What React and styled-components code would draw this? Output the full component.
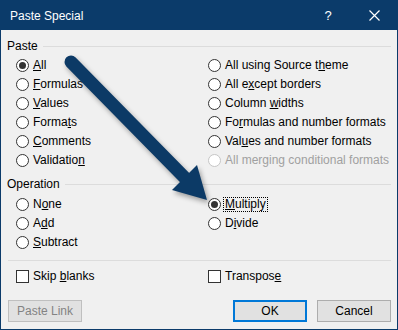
import React from 'react';
import styled, {createGlobalStyle, css} from 'styled-components';

const Global = createGlobalStyle`
  html, body {
    margin: 0;
    padding: 0;
    background: #ffffff;
  }
  body {
    font-family: "Liberation Sans", Arial, sans-serif;
    font-size: 12px;
    color: #000;
  }
`;

const BLUE = '#0b3b6a';

const Dialog = styled.div`
  position: relative;
  width: 398px;
  height: 330px;
  box-sizing: border-box;
  border: 1px solid ${BLUE};
  background: #f0f0f0;
  display: flex;
  flex-direction: column;
`;

const TitleBar = styled.div`
  height: 29px;
  background: ${BLUE};
  color: #fff;
  display: flex;
  align-items: center;
  padding-left: 9px;
`;

const Title = styled.div`
  flex: 1;
`;

const TitleButton = styled.div`
  width: 46px;
  height: 29px;
  display: flex;
  align-items: center;
  justify-content: center;
  font-size: 13px;
`;

const Body = styled.div`
  flex: 1;
  display: flex;
  flex-direction: column;
  padding: 8px 6px 7px 6px;
`;

const Legend = styled.div`
  display: flex;
  align-items: center;
  height: 16px;
  margin-top: ${p => p.$top || 0}px;

  &::after {
    content: '';
    flex: 1;
    height: 1px;
    background: #dcdcdc;
    margin-left: 5px;
  }
`;

const OptionGrid = styled.div`
  display: grid;
  grid-template-columns: 192px 1fr;
  grid-auto-flow: column;
  grid-template-rows: repeat(${p => p.$rows}, 19px);
  padding-left: 9px;
  margin-top: ${p => p.$top || 0}px;
`;

const Option = styled.label`
  display: flex;
  align-items: center;
  gap: 4px;
  color: ${p => (p.$disabled ? '#a0a0a0' : '#000')};
  white-space: nowrap;
`;

const Radio = styled.span`
  box-sizing: border-box;
  width: 13px;
  height: 13px;
  border-radius: 50%;
  border: 1px solid ${p => (p.$disabled ? '#c6c6c6' : '#333')};
  background: #fff;
  display: flex;
  align-items: center;
  justify-content: center;

  ${p => p.$checked && css`
    &::after {
      content: '';
      width: 7px;
      height: 7px;
      border-radius: 50%;
      background: #333;
    }
  `}
`;

const Check = styled.span`
  box-sizing: border-box;
  width: 13px;
  height: 13px;
  border: 1px solid #333;
  background: #fff;
`;

const Text = styled.span`
  line-height: 13px;
  padding: 0 1px;
  margin-left: -1px;
  outline: ${p => (p.$focus ? '1px dotted #000' : 'none')};
  outline-offset: 0;
`;

const Separator = styled.div`
  height: 1px;
  background: #dcdcdc;
  margin: 8px 0 6px 1px;
`;

const Footer = styled.div`
  display: flex;
  align-items: center;
  margin-top: auto;
  padding-left: 1px;
  gap: 10px;
`;

const Spacer = styled.div`
  flex: 1;
`;

const Button = styled.div`
  box-sizing: border-box;
  width: 74px;
  height: 22px;
  display: flex;
  align-items: center;
  justify-content: center;
  background: #e1e1e1;
  border: ${p => (p.$default ? '2px solid #0078d7' : p.$disabled ? '1px solid #bfbfbf' : '1px solid #adadad')};
  color: ${p => (p.$disabled ? '#838383' : '#000')};
`;

const ArrowLayer = styled.svg`
  position: absolute;
  left: 0;
  top: 0;
  pointer-events: none;
  filter: drop-shadow(2px 3px 2.5px rgba(0, 0, 0, 0.35));
`;

function Label({text, u, focus}) {
  if (u == null) return <Text $focus={focus}>{text}</Text>;
  return (
    <Text $focus={focus}>
      {text.slice(0, u)}<u>{text[u]}</u>{text.slice(u + 1)}
    </Text>
  );
}

const pasteOptions = [
  {text: 'All', u: 0, checked: true},
  {text: 'Formulas', u: 0},
  {text: 'Values', u: 0},
  {text: 'Formats', u: 5},
  {text: 'Comments', u: 0},
  {text: 'Validation', u: 9},
  {text: 'All using Source theme', u: 18},
  {text: 'All except borders', u: 5},
  {text: 'Column widths', u: 7},
  {text: 'Formulas and number formats', u: 2},
  {text: 'Values and number formats', u: 3},
  {text: 'All merging conditional formats', disabled: true},
];

const operationOptions = [
  {text: 'None', u: 1},
  {text: 'Add', u: 1},
  {text: 'Subtract', u: 0},
  {text: 'Multiply', u: 0, checked: true, focus: true},
  {text: 'Divide', u: 1},
  null,
];

export default function App() {
  return (
    <>
      <Global />
      <Dialog>
        <TitleBar>
          <Title>Paste Special</Title>
          <TitleButton>?</TitleButton>
          <TitleButton>
            <svg width="11" height="11" viewBox="0 0 11 11">
              <path d="M0.5 0.5 L10.5 10.5 M10.5 0.5 L0.5 10.5" stroke="#fff" strokeWidth="1.2" />
            </svg>
          </TitleButton>
        </TitleBar>
        <Body>
          <Legend>Paste</Legend>
          <OptionGrid $rows={6} $top={2}>
            {pasteOptions.map(o => (
              <Option key={o.text} $disabled={o.disabled}>
                <Radio $checked={o.checked} $disabled={o.disabled} />
                <Label text={o.text} u={o.u} />
              </Option>
            ))}
          </OptionGrid>
          <Legend $top={6}>Operation</Legend>
          <OptionGrid $rows={3} $top={3}>
            {operationOptions.map((o, i) => (
              o ? (
                <Option key={o.text}>
                  <Radio $checked={o.checked} />
                  <Label text={o.text} u={o.u} focus={o.focus} />
                </Option>
              ) : <span key={i} />
            ))}
          </OptionGrid>
          <Separator />
          <OptionGrid $rows={1}>
            <Option>
              <Check />
              <Label text="Skip blanks" u={5} />
            </Option>
            <Option>
              <Check />
              <Label text="Transpose" u={8} />
            </Option>
          </OptionGrid>
          <Footer>
            <Button $disabled>Paste Link</Button>
            <Spacer />
            <Button $default>OK</Button>
            <Button>Cancel</Button>
          </Footer>
        </Body>
        <ArrowLayer width="398" height="330" viewBox="0 0 398 330">
          <path d="M70 61 L186 179" stroke="#0c3a66" strokeWidth="13" strokeLinecap="round" />
          <polygon points="206,199 196,164 171,189" fill="#0c3a66" />
        </ArrowLayer>
      </Dialog>
    </>
  );
}
